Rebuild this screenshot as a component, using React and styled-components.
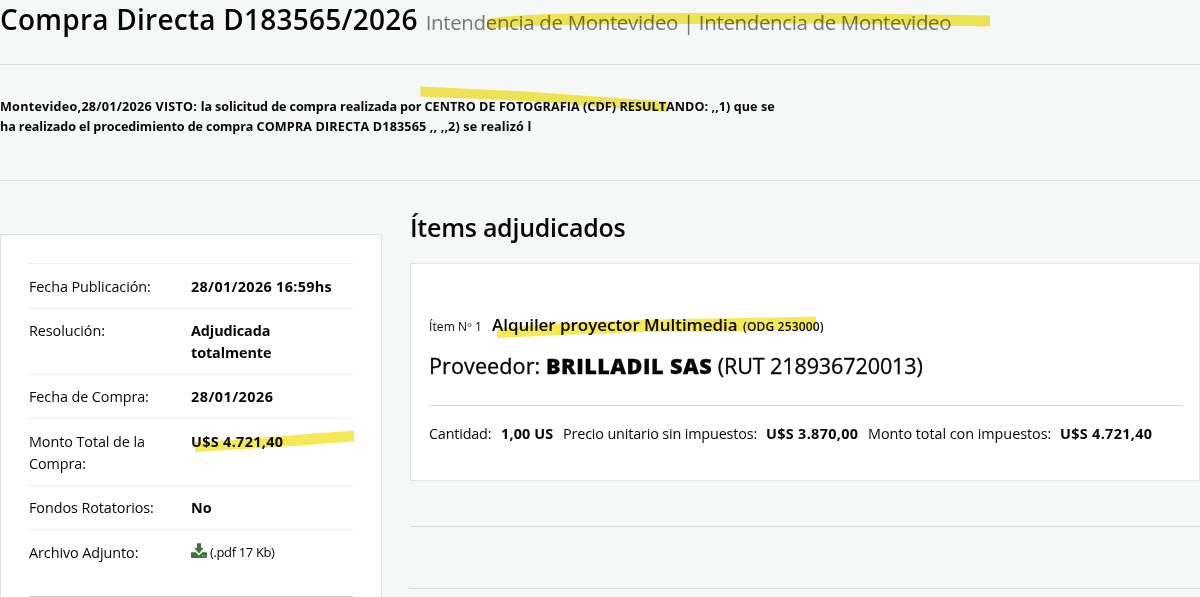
import React from "react";
import styled, { createGlobalStyle } from "styled-components";

const GlobalStyle = createGlobalStyle`
* { box-sizing: border-box; }
html { overflow: hidden; }
body {
  margin: 0;
  background: #f6f8f8;
  color: #060606;
  font-family: "Open Sans", "Noto Sans", sans-serif;
  font-size: 14.4px;
  line-height: 21.6px;
}
`;

const Container = styled.div`
position: relative;
width: 1200px;
height: 597px;
overflow: hidden;
`;

const Header = styled.header`
height: 65px;
border-bottom: 1px solid #d9dbdb;
white-space: nowrap;
`;

const Title = styled.h1`
margin: 0;
font-size: 28px;
font-weight: 600;
line-height: 38px;
letter-spacing: 0.24px;
`;

const Buyer = styled.small`
margin-left: 8px;
color: #777;
font-size: 20.5px;
font-weight: 400;
letter-spacing: -0.36px;
`;

const Summary = styled.section`
height: 116px;
padding-top: 32px;
border-bottom: 1px solid #d9dbdb;
`;

const SummaryText = styled.p`
margin: 0;
font-size: 12.6px;
font-weight: 700;
line-height: 20px;
white-space: nowrap;
`;

const Track = styled.span`
letter-spacing: ${(props) => props.$space};
`;

const Columns = styled.main`
display: flex;
align-items: flex-start;
gap: 28px;
`;

const SideCard = styled.aside`
width: 382px;
height: 380px;
margin-top: 53px;
padding: 28px;
border: 1px solid #dfe2e2;
background: #fff;
`;

const Row = styled.div`
display: flex;
width: 324px;
padding: 11.6px 0 10.4px;
border-top: 1px solid #f1f1f1;
`;

const Label = styled.div`
width: 162px;
padding-right: 30px;
letter-spacing: -0.08px;
`;

const Value = styled.div`
width: 162px;
font-weight: 700;
letter-spacing: ${(props) => props.$space || "0px"};
`;

const FileLink = styled.div`
display: flex;
align-items: center;
gap: 3px;
font-size: 13px;
letter-spacing: -0.36px;

svg {
  margin-bottom: 2px;
}
`;

const SideRule = styled.div`
width: 324px;
margin-top: 22px;
border-top: 1px solid #c9cccc;
`;

const Content = styled.section`
width: 790px;
`;

const ContentTitle = styled.h2`
height: 82px;
margin: 0;
padding-top: 28px;
font-size: 25px;
font-weight: 600;
line-height: 36px;
letter-spacing: -0.26px;
`;

const ItemCard = styled.article`
height: 218px;
padding: 48px 17px 0 18px;
border: 1px solid #e1e4e4;
background: #fff;
white-space: nowrap;
`;

const ItemHead = styled.div`
display: flex;
align-items: baseline;
height: 28px;
line-height: 26px;
`;

const ItemNumber = styled.span`
width: 63px;
font-size: 12px;
letter-spacing: 0.1px;
`;

const ItemName = styled.span`
width: 251px;
font-size: 17px;
font-weight: 600;
letter-spacing: -0.04px;
`;

const ItemCode = styled.span`
font-size: 12px;
font-weight: 600;
letter-spacing: 0.15px;
`;

const Provider = styled.h3`
height: 66px;
margin: 0;
padding-top: 10px;
border-bottom: 1px solid #d9dbdb;
font-size: 21.6px;
font-weight: 400;
line-height: 32px;
-webkit-text-stroke: 0.3px #060606;
`;

const ProviderName = styled.strong`
font-weight: 800;
letter-spacing: 0.5px;
`;

const Amounts = styled.div`
display: flex;
padding-top: 17px;
`;

const Amount = styled.div`
width: ${(props) => props.$width};
font-weight: ${(props) => (props.$bold ? 700 : 400)};
letter-spacing: ${(props) => props.$space || "0px"};
`;

const Rule = styled.div`
height: ${(props) => props.$height};
border-bottom: 1px solid #d5d8d8;
`;

const Marker = styled.svg`
position: absolute;
top: 0;
left: 0;
mix-blend-mode: multiply;
pointer-events: none;
`;

const DownloadIcon = () => (
  <svg width="16" height="16" viewBox="0 0 16 16" fill="#41713d">
    <path d="M0.7 9.3h4L8 12.4l3.3-3.1h4q.7 0 .7.7v4.3q0 .7-.7.7H.7q-.7 0-.7-.7V10q0-.7.7-.7z" />
    <path d="M6 0.3h4v4.4h2.8L8 10.4 3.2 4.7H6z" />
    <path d="M11 12.4h1.1v1.1H11zM13.2 12.4h1.1v1.1h-1.1z" fill="#d8e4d6" />
  </svg>
);

// highlighter strokes drawn over the text
const strokes = [
  "M487 19 C510 15 560 13 620 13 L830 13 L990 15.5 L990 26.5 L830 23.5 L620 24 C560 25 510 26 487 29 Z",
  "M420.5 86.5 L525 91.5 L667 101.5 L667 112 L610 107.5 L525 101 L420.5 96.5 Z",
  "M497 328.5 C560 322 650 319 720 318.5 L816 316.5 L816 329 L730 331.5 L640 332 L560 335 L497 338 Z",
  "M195 442 C240 440 280 436 354 430.5 L354 441.5 C300 445.5 250 449 195 452 Z",
];

const rows = [
  { label: "Fecha Publicación:", value: "28/01/2026 16:59hs", space: "0.33px" },
  { label: "Resolución:", value: <>Adjudicada<br />totalmente</>, space: "-0.1px" },
  { label: "Fecha de Compra:", value: "28/01/2026", space: "0.46px" },
  { label: "Monto Total de la Compra:", value: "U$S 4.721,40", space: "0.33px" },
  { label: "Fondos Rotatorios:", value: "No" },
];

const App = () => {
  return (
    <>
      <GlobalStyle />
      <Container>
        <Header>
          <Title>
            Compra Directa D183565/2026
            <Buyer>Intendencia de Montevideo | Intendencia de Montevideo</Buyer>
          </Title>
        </Header>

        <Summary>
          <SummaryText>
            <Track $space="0.25px">Montevideo,28/01/2026 VISTO: </Track>
            <Track $space="-0.1px">la solicitud de compra realizada por </Track>
            <Track $space="0.06px">CENTRO DE FOTOGRAFIA (CDF) RESULTANDO: ,,1) que se</Track>
          </SummaryText>
          <SummaryText>
            <Track $space="-0.1px">ha realizado el procedimiento de compra </Track>
            <Track $space="0.14px">COMPRA DIRECTA D183565 ,, ,,2) se realizó l</Track>
          </SummaryText>
        </Summary>

        <Columns>
          <SideCard>
            {rows.map((row) => (
              <Row key={row.label}>
                <Label>{row.label}</Label>
                <Value $space={row.space}>{row.value}</Value>
              </Row>
            ))}
            <Row>
              <Label>Archivo Adjunto:</Label>
              <FileLink>
                <DownloadIcon />
                <span>(.pdf 17 Kb)</span>
              </FileLink>
            </Row>
            <SideRule />
          </SideCard>

          <Content>
            <ContentTitle>Ítems adjudicados</ContentTitle>
            <ItemCard>
              <ItemHead>
                <ItemNumber>Ítem Nº 1</ItemNumber>
                <ItemName>Alquiler proyector Multimedia</ItemName>
                <ItemCode>(ODG 253000)</ItemCode>
              </ItemHead>
              <Provider>
                <Track $space="0.08px">Proveedor: </Track>
                <ProviderName>BRILLADIL SAS</ProviderName>{" "}
                <Track $space="-0.14px">(RUT 218936720013)</Track>
              </Provider>
              <Amounts>
                <Amount $width="72px" $space="-0.2px">Cantidad:</Amount>
                <Amount $width="62px" $space="0.15px" $bold>1,00 US</Amount>
                <Amount $width="203px" $space="-0.16px">Precio unitario sin impuestos:</Amount>
                <Amount $width="102px" $space="0.33px" $bold>U$S 3.870,00</Amount>
                <Amount $width="192px" $space="-0.04px">Monto total con impuestos:</Amount>
                <Amount $width="110px" $space="0.33px" $bold>U$S 4.721,40</Amount>
              </Amounts>
            </ItemCard>
            <Rule $height="46px" />
            <Rule $height="62px" />
          </Content>
        </Columns>

        <Marker width="1200" height="597" viewBox="0 0 1200 597" fill="#f5e955">
          {strokes.map((d) => (
            <path key={d} d={d} />
          ))}
        </Marker>
      </Container>
    </>
  );
};

export default App;
